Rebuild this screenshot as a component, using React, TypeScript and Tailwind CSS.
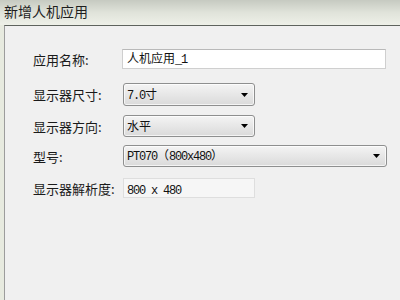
import { ReactNode } from 'react';

const cjk = '[font-family:"Noto_Sans_CJK_SC","Noto_Sans",sans-serif]';

function Mono({ children }: { children: ReactNode }) {
    return (
        <span className="[font-family:'Liberation_Mono',monospace] text-[12px] tracking-[-1.2px]">
            {children}
        </span>
    );
}

function Arrow() {
    return (
        <svg width="7" height="4" viewBox="0 0 7 4" className="shrink-0">
            <path d="M0 0H7L3.5 4Z" fill="#000" />
        </svg>
    );
}

function Select({ width, children }: { width: string; children: ReactNode }) {
    return (
        <div
            className={`${width} flex h-full items-center justify-between rounded-[3px] border border-[#8e8f8f] bg-linear-to-b from-[#f4f4f4] to-[#dadada] pl-[3px] pr-[6px] shadow-[inset_0_0_0_1px_rgba(255,255,255,0.7)]`}
        >
            <span className="text-[12px] leading-none text-[#111]">{children}</span>
            <Arrow />
        </div>
    );
}

function Row({ label, mt, h, children }: { label: string; mt: string; h: string; children: ReactNode }) {
    return (
        <div className={`flex items-center ${mt} ${h}`}>
            <div className="w-[90px] text-[13px] leading-none text-[#1a1a1a]">{label}</div>
            {children}
        </div>
    );
}

export default function App() {
    return (
        <div className={`flex h-[300px] w-[400px] flex-col overflow-hidden bg-[#f0f0f0] ${cjk}`}>
            <div className="flex h-[25px] items-center bg-linear-to-b from-[#c6cac1] via-[#e0e3da] to-[#eef0e8] pl-[4px] pb-[4px]">
                <span className="text-[14px] leading-none text-[#1e1e1e]">新增人机应用</span>
            </div>

            <div className="flex flex-1">
                <div className="w-[4px] bg-[#e7eadf]" />
                <div className="flex-1 border-l border-t border-l-[#9c9c9c] border-t-[#5e635d] bg-[#f0f0f0] pl-[28px]">
                    <div className="flex flex-col pt-[23px]">
                        <Row label="应用名称:" mt="mt-0" h="h-[20px]">
                            <div className="-ml-px flex h-full w-[264px] items-center border border-[#cfcfcf] border-t-[#b9b9b9] bg-white pl-[4px]">
                                <span className="text-[12px] leading-none text-[#111]">
                                    人机应用<Mono>_1</Mono>
                                </span>
                            </div>
                        </Row>

                        <Row label="显示器尺寸:" mt="mt-[14px]" h="h-[23px]">
                            <Select width="w-[132px]">
                                <Mono>7.0</Mono>寸
                            </Select>
                        </Row>

                        <Row label="显示器方向:" mt="mt-[9px]" h="h-[22px]">
                            <Select width="w-[132px]">水平</Select>
                        </Row>

                        <Row label="型号:" mt="mt-[8px]" h="h-[22px]">
                            <Select width="w-[264px]">
                                <Mono>PT070</Mono>（<Mono>800x480</Mono>）
                            </Select>
                        </Row>

                        <Row label="显示器解析度:" mt="mt-[11px]" h="h-[20px]">
                            <div className="flex h-full w-[132px] items-center border border-[#dedede] bg-[#f6f6f6] pl-[3px]">
                                <span className="leading-none text-[#111]">
                                    <Mono>800 x 480</Mono>
                                </span>
                            </div>
                        </Row>
                    </div>
                </div>
            </div>
        </div>
    );
}
